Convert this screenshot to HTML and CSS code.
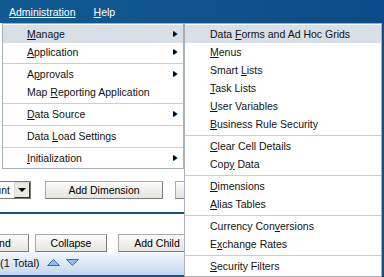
FILE: index.html
```html
<!DOCTYPE html>
<html lang="en">
<head>
    <meta charset="UTF-8">
    <title>Administration - Manage</title>
    <link rel="stylesheet" href="styles.css">
</head>
<body>
    <div class="menubar">
        <span class="menubar-item active">Administration</span>
        <span class="menubar-item"><u>H</u>elp</span>
    </div>

    <div class="page">
        <div class="toolbar">
            <div class="select">
                <span class="select-text">Account</span>
                <span class="select-btn"><span class="down"></span></span>
            </div>
            <button class="btn btn-dimension">Add Dimension</button>
            <button class="btn btn-edit"></button>
        </div>

        <div class="rule"></div>

        <div class="toolbar toolbar-tree">
            <button class="btn btn-expand">Expand</button>
            <button class="btn btn-collapse">Collapse</button>
            <button class="btn btn-child">Add Child</button>
        </div>

        <div class="status">
            <span>(1 Total)</span>
            <svg class="sort" width="13" height="7" viewBox="0 0 13 7">
                <polygon points="0.5,6.5 6.5,0.5 12.5,6.5" fill="#8fbbea" stroke="#2d6fc2"/>
            </svg>
            <svg class="sort" width="13" height="7" viewBox="0 0 13 7">
                <polygon points="0.5,0.5 12.5,0.5 6.5,6.5" fill="#8fbbea" stroke="#2d6fc2"/>
            </svg>
        </div>
    </div>

    <!-- dropdown: Administration -->
    <div class="menu menu-main">
        <div class="item selected"><span><u>M</u>anage</span><span class="arrow"></span></div>
        <div class="item"><span><u>A</u>pplication</span><span class="arrow"></span></div>
        <div class="sep"></div>
        <div class="item"><span>A<u>p</u>provals</span><span class="arrow"></span></div>
        <div class="item"><span>Map <u>R</u>eporting Application</span></div>
        <div class="sep"></div>
        <div class="item"><span><u>D</u>ata Source</span><span class="arrow"></span></div>
        <div class="sep"></div>
        <div class="item"><span>Data <u>L</u>oad Settings</span></div>
        <div class="sep"></div>
        <div class="item"><span><u>I</u>nitialization</span><span class="arrow"></span></div>
    </div>

    <!-- submenu: Manage -->
    <div class="menu menu-sub">
        <div class="item selected"><span>Data <u>F</u>orms and Ad Hoc Grids</span></div>
        <div class="item"><span><u>M</u>enus</span></div>
        <div class="item"><span>Smart <u>L</u>ists</span></div>
        <div class="item"><span><u>T</u>ask Lists</span></div>
        <div class="item"><span><u>U</u>ser Variables</span></div>
        <div class="item"><span><u>B</u>usiness Rule Security</span></div>
        <div class="sep"></div>
        <div class="item"><span><u>C</u>lear Cell Details</span></div>
        <div class="item"><span>Cop<u>y</u> Data</span></div>
        <div class="sep"></div>
        <div class="item"><span><u>D</u>imensions</span></div>
        <div class="item"><span><u>A</u>lias Tables</span></div>
        <div class="sep"></div>
        <div class="item"><span>Currency Con<u>v</u>ersions</span></div>
        <div class="item"><span>E<u>x</u>change Rates</span></div>
        <div class="sep"></div>
        <div class="item"><span><u>S</u>ecurity Filters</span></div>
    </div>
</body>
</html>
```

FILE: styles.css
```css
* {
    box-sizing: border-box;
}

body {
    margin: 0;
    width: 384px;
    height: 277px;
    overflow: hidden;
    position: relative;
    background: white;
    font-family: 'Liberation Sans', Arial, sans-serif;
    font-size: 10.5px;
    color: #111;
}

/* top menu bar */
.menubar {
    height: 23px;
    padding: 1px 0 0 9px;
    line-height: 22px;
    display: flex;
    gap: 18px;
    background: linear-gradient(to right, #115a91, #0c4b89);
    color: white;
}

.menubar-item.active {
    text-decoration: underline;
}

/* page behind the menus */
.page {
    padding-top: 158px;
}

.toolbar {
    display: flex;
    align-items: center;
    height: 18px;
}

.select {
    display: flex;
    align-items: center;
    width: 62px;
    height: 18px;
    margin-left: -31px;
    border: 1px solid #7a7a7a;
    background: white;
}

.select-text {
    flex: 1;
    padding-left: 2px;
    line-height: 16px;
}

.select-btn {
    width: 16px;
    height: 16px;
    display: flex;
    align-items: center;
    justify-content: center;
    border: 1px solid #333;
    border-top-color: #d8d8d8;
    border-left-color: #d8d8d8;
    background: #e9e8e3;
}

.down {
    width: 0;
    height: 0;
    border-top: 4px solid #000;
    border-left: 4px solid transparent;
    border-right: 4px solid transparent;
}

.btn {
    height: 18px;
    padding: 0;
    font-family: inherit;
    font-size: 10.5px;
    line-height: 16px;
    color: #000;
    background: linear-gradient(#fbfbfa, #e6e5e0);
    border: 1px solid #ababab;
    border-right-color: #7d7d7d;
    border-bottom-color: #7d7d7d;
    border-radius: 0;
    flex-shrink: 0;
}

.btn-dimension {
    width: 118px;
    margin-left: 14px;
}

.btn-edit {
    width: 72px;
    margin-left: 12px;
}

.rule {
    height: 2px;
    margin-top: 13px;
    background: #1d4f7c;
}

.toolbar-tree {
    margin-top: 20px;
}

.btn-expand {
    width: 72px;
    margin-left: -43px;
}

.btn-collapse {
    width: 72px;
    margin-left: 6px;
}

.btn-child {
    width: 78px;
    margin-left: 11px;
}

.status {
    height: 25px;
    display: flex;
    align-items: center;
    gap: 6px;
    padding-bottom: 2px;
    font-size: 11px;
    background: linear-gradient(#f4f8fd, #c5d8ef);
    border-bottom: 2px solid #1f4f85;
}

.status span {
    margin-right: 1px;
}

/* dropdown menus */
.menu {
    position: absolute;
    top: 23px;
    background: white;
    border: 1px solid #a6aebb;
    padding: 1px 0;
}

.menu-main {
    left: 2px;
    width: 182px;
}

.menu-sub {
    left: 184px;
    width: 198px;
    box-shadow: 2px 0 0 #1b4a7d;
}

.item {
    height: 18px;
    line-height: 18px;
    padding: 0 5px 0 24px;
    display: flex;
    align-items: center;
    justify-content: space-between;
    white-space: nowrap;
}

.menu-sub .item {
    padding-left: 25px;
}

.item.selected {
    background: #d9dfe7;
}

.arrow {
    width: 0;
    height: 0;
    border-left: 4px solid #000;
    border-top: 3.5px solid transparent;
    border-bottom: 3.5px solid transparent;
    filter: drop-shadow(1px 0 0 #2c86d8);
    margin-right: 1px;
}

.sep {
    height: 1px;
    margin: 2px 0 1px;
    background: #c6cedb;
}
```
